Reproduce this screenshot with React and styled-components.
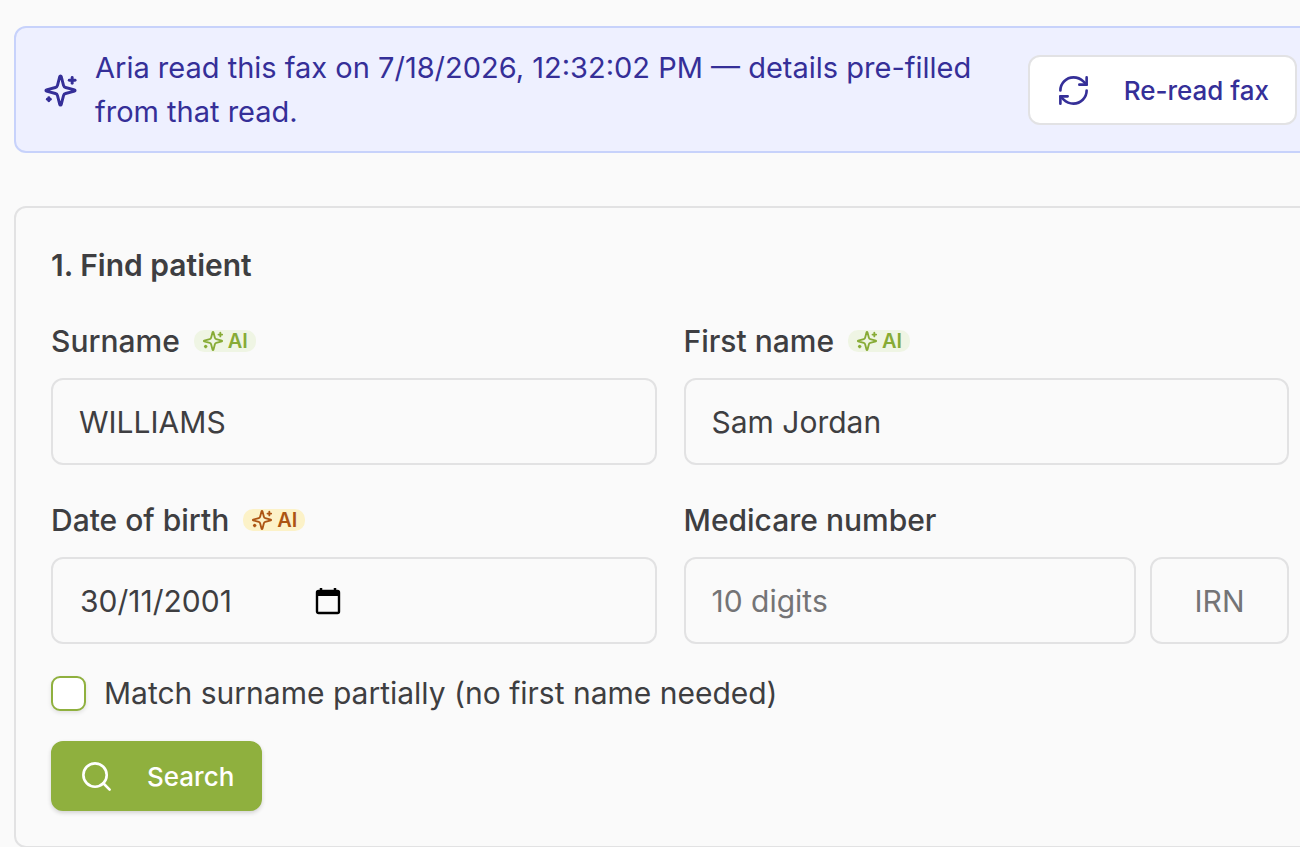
import React, { useState } from "react";
import styled, { createGlobalStyle } from "styled-components";
import { RefreshCw, Search } from "lucide-react";

const GlobalStyle = createGlobalStyle`
  * {
    box-sizing: border-box;
  }
  body {
    margin: 0;
    background: #fafafa;
    color: #3e3e41;
    font-family: Inter, "Liberation Sans", sans-serif;
    font-size: 30px;
    line-height: 44px;
    overflow-x: hidden;
  }
  input, button {
    font-family: inherit;
    color: inherit;
  }
`;

function SparklesIcon({ size }) {
  return (
    <svg width={size} height={size} viewBox="0 0 24 24" fill="none" stroke="currentColor"
      strokeWidth="2" strokeLinecap="round" strokeLinejoin="round" aria-hidden="true">
      <path d="M9.937 15.5A2 2 0 0 0 8.5 14.063l-6.135-1.582a.5.5 0 0 1 0-.962L8.5 9.936A2 2 0 0 0 9.937 8.5l1.582-6.135a.5.5 0 0 1 .963 0L14.063 8.5A2 2 0 0 0 15.5 9.937l6.135 1.581a.5.5 0 0 1 0 .964L15.5 14.063a2 2 0 0 0-1.437 1.437l-1.582 6.135a.5.5 0 0 1-.963 0z" />
      <path d="M20 3v4" />
      <path d="M22 5h-4" />
      <path d="M4 17v2" />
      <path d="M5 18H3" />
    </svg>
  );
}

function CalendarIcon() {
  return (
    <svg width="26" height="28" viewBox="0 0 26 28" fill="none" aria-hidden="true">
      <path d="M6 1v4M20 1v4" stroke="#000" strokeWidth="2.5" />
      <rect x="2" y="4" width="22" height="22" rx="1.5" stroke="#000" strokeWidth="2.4" />
      <path d="M2 4h22v5H2z" fill="#000" />
    </svg>
  );
}

function AiBadge({ tone }) {
  return (
    <Badge $tone={tone}>
      <SparklesIcon size={22} />
      AI
    </Badge>
  );
}

export default function App() {
  const [surname, setSurname] = useState("WILLIAMS");
  const [firstName, setFirstName] = useState("Sam Jordan");
  const [dob, setDob] = useState("30/11/2001");

  return (
    <>
      <GlobalStyle />
      <Page>
        <Banner>
          <SparklesIcon size={35} />
          <BannerText>
            Aria read this fax on 7/18/2026, 12:32:02 PM — details pre-filled from that read.
          </BannerText>
          <RereadButton type="button">
            <RefreshCw size={35} strokeWidth={1.8} />
            Re-read fax
          </RereadButton>
        </Banner>

        <Card onSubmit={(e) => e.preventDefault()}>
          <Title>1. Find patient</Title>
          <Fields>
            <Field>
              <LabelRow>
                <Label htmlFor="surname">Surname</Label>
                <AiBadge tone="green" />
              </LabelRow>
              <Input id="surname" value={surname} onChange={(e) => setSurname(e.target.value)} />
            </Field>
            <Field>
              <LabelRow>
                <Label htmlFor="firstName">First name</Label>
                <AiBadge tone="green" />
              </LabelRow>
              <Input id="firstName" value={firstName} onChange={(e) => setFirstName(e.target.value)} />
            </Field>
            <Field>
              <LabelRow>
                <Label htmlFor="dob">Date of birth</Label>
                <AiBadge tone="amber" />
              </LabelRow>
              <DateBox>
                <DateInput id="dob" value={dob} onChange={(e) => setDob(e.target.value)} />
                <PickerButton type="button" aria-label="Open calendar">
                  <CalendarIcon />
                </PickerButton>
              </DateBox>
            </Field>
            <Field>
              <LabelRow>
                <Label htmlFor="medicare">Medicare number</Label>
              </LabelRow>
              <Medicare>
                <Input id="medicare" placeholder="10 digits" />
                <IrnInput aria-label="IRN" placeholder="IRN" />
              </Medicare>
            </Field>
          </Fields>
          <CheckRow>
            <Checkbox type="checkbox" />
            Match surname partially (no first name needed)
          </CheckRow>
          <SearchButton type="submit">
            <Search size={35} strokeWidth={1.8} />
            Search
          </SearchButton>
        </Card>
      </Page>
    </>
  );
}

/* the panel is wider than the window, its right edge runs off screen */
const Page = styled.main`
  display: flex;
  flex-direction: column;
  gap: 53px;
  margin-right: -26px;
  padding: 26px 0 0 14px;
`;

const Banner = styled.section`
  display: flex;
  align-items: center;
  gap: 17px;
  padding: 18px 27px 17px;
  border: 2px solid #c7d2fb;
  border-radius: 12px;
  background: #eef0ff;
  color: #352f98;
  svg {
    flex-shrink: 0;
  }
`;

const BannerText = styled.p`
  flex: 1;
  margin: 0;
  font-size: 29px;
`;

const Button = styled.button`
  display: inline-flex;
  align-items: center;
  gap: 33px;
  height: 70px;
  padding: 0 26px;
  border: 2px solid transparent;
  border-radius: 12px;
  font-size: 26px;
  font-weight: 500;
  white-space: nowrap;
  cursor: pointer;
`;

const RereadButton = styled(Button)`
  border-color: #e2e2e4;
  background: #fff;
`;

const SearchButton = styled(Button)`
  margin-top: 26px;
  background: #8fb03e;
  border-color: #8fb03e;
  color: #fff;
  box-shadow: 0 2px 4px rgba(0, 0, 0, 0.16);
`;

const Card = styled.form`
  padding: 35px;
  border: 2px solid #e2e2e3;
  border-radius: 12px;
`;

const Title = styled.h2`
  margin: 0 0 32px;
  font-size: 30px;
  font-weight: 600;
`;

const Fields = styled.div`
  display: grid;
  grid-template-columns: 1fr 1fr;
  gap: 33px 27px;
`;

const Field = styled.div`
  display: flex;
  flex-direction: column;
  gap: 15px;
  min-width: 0;
`;

const LabelRow = styled.div`
  display: flex;
  align-items: center;
  gap: 14px;
`;

const Label = styled.label`
  font-weight: 500;
`;

const Badge = styled.span`
  display: inline-flex;
  align-items: center;
  gap: 4px;
  height: 22px;
  padding: 0 8px;
  border-radius: 10px;
  background: ${(p) => (p.$tone === "amber" ? "#fcf2c8" : "#eff5e4")};
  color: ${(p) => (p.$tone === "amber" ? "#ac5413" : "#87ab35")};
  font-size: 20px;
  font-weight: 600;
  line-height: 22px;
`;

const Input = styled.input`
  width: 100%;
  min-width: 0;
  height: 87px;
  padding: 0 26px;
  border: 2px solid #e2e2e3;
  border-radius: 12px;
  background: transparent;
  font-size: 30px;
  &::placeholder {
    color: #747476;
    opacity: 1;
  }
`;

const IrnInput = styled(Input)`
  text-align: center;
`;

const Medicare = styled.div`
  display: grid;
  grid-template-columns: 1fr 139px;
  gap: 14px;
`;

const DateBox = styled.div`
  display: flex;
  align-items: center;
  height: 87px;
  padding: 0 27px;
  border: 2px solid #e2e2e3;
  border-radius: 12px;
`;

const DateInput = styled.input`
  width: 235px;
  padding: 0;
  border: 0;
  background: transparent;
  font-size: 30px;
`;

const PickerButton = styled.button`
  display: flex;
  padding: 0;
  border: 0;
  background: none;
  cursor: pointer;
`;

const CheckRow = styled.label`
  display: flex;
  align-items: center;
  gap: 18px;
  margin-top: 27px;
`;

const Checkbox = styled.input`
  appearance: none;
  width: 35px;
  height: 35px;
  margin: 0;
  border: 2px solid #8fb03e;
  border-radius: 9px;
  background: #fff;
  box-shadow: 0 2px 4px rgba(0, 0, 0, 0.1);
  &:checked {
    background: #8fb03e;
  }
`;
